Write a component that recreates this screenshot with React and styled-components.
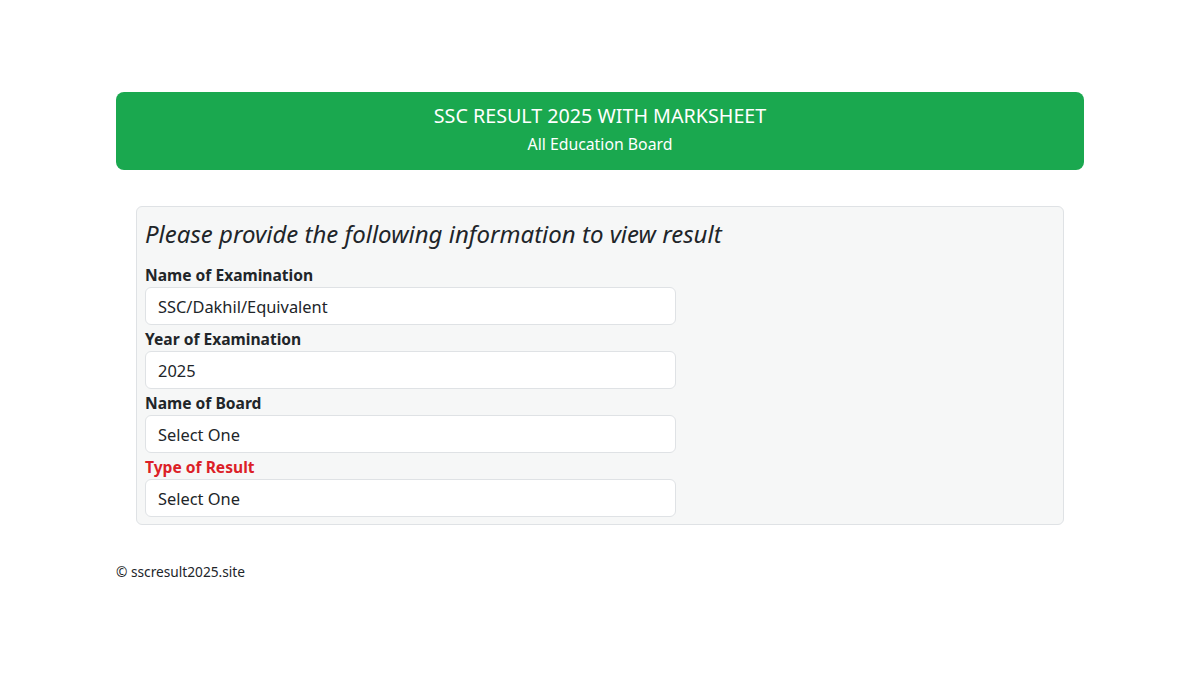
import styled, { createGlobalStyle } from "styled-components";

const GlobalStyle = createGlobalStyle`
  * { box-sizing: border-box; }
  body {
    margin: 0;
    background: #fff;
    color: #212529;
    font-family: "Noto Sans", "Open Sans", sans-serif;
    font-size: 16px;
    line-height: 1.5;
  }
`;

const Page = styled.div`
  width: 968px;
  margin: 0 auto;
  padding-top: 92px;
`;

const Banner = styled.header`
  background: #1aa84f;
  color: #fff;
  border-radius: 8px;
  text-align: center;
  padding: 12px 16px 14px;
`;

const BannerTitle = styled.h1`
  margin: 0;
  font-size: 19.7px;
  font-weight: 400;
  line-height: 24px;
`;

const BannerSub = styled.p`
  margin: 4px 0 0;
  font-size: 15.8px;
  line-height: 24px;
`;

const Card = styled.form`
  margin: 36px 20px 0;
  background: #f6f7f7;
  border: 1px solid #dfe2e5;
  border-radius: 6px;
  padding: 12px 8px 5px;
`;

const Heading = styled.h2`
  margin: 0 0 15px;
  font-size: 24px;
  font-style: italic;
  font-weight: 400;
  line-height: 29px;
`;

const Field = styled.div`
  display: flex;
  flex-direction: column;
  width: 531px;
  margin-bottom: 2px;
`;

const Label = styled.label`
  font-size: 15.6px;
  font-weight: 700;
  line-height: 24px;
  color: ${(p) => (p.$danger ? "#dc1f28" : "#212529")};
`;

const Select = styled.select`
  appearance: none;
  height: 38px;
  padding: 0 12px;
  border: 1px solid #dfe2e5;
  border-radius: 6px;
  background: #fff;
  color: #212529;
  font-family: inherit;
  font-size: 16.4px;
  outline: none;
`;

const Footer = styled.footer`
  margin-top: 37px;
  font-size: 13.7px;
  line-height: 20px;
`;

const fields = [
  { label: "Name of Examination", options: ["SSC/Dakhil/Equivalent"] },
  { label: "Year of Examination", options: ["2025"] },
  { label: "Name of Board", options: ["Select One"] },
  { label: "Type of Result", options: ["Select One"], danger: true },
];

export default function App() {
  return (
    <>
      <GlobalStyle />
      <Page>
        <Banner>
          <BannerTitle>SSC RESULT 2025 WITH MARKSHEET</BannerTitle>
          <BannerSub>All Education Board</BannerSub>
        </Banner>
        <Card>
          <Heading>Please provide the following information to view result</Heading>
          {fields.map((f) => (
            <Field key={f.label}>
              <Label $danger={f.danger}>{f.label}</Label>
              <Select defaultValue={f.options[0]}>
                {f.options.map((o) => (
                  <option key={o}>{o}</option>
                ))}
              </Select>
            </Field>
          ))}
        </Card>
        <Footer>© sscresult2025.site</Footer>
      </Page>
    </>
  );
}
